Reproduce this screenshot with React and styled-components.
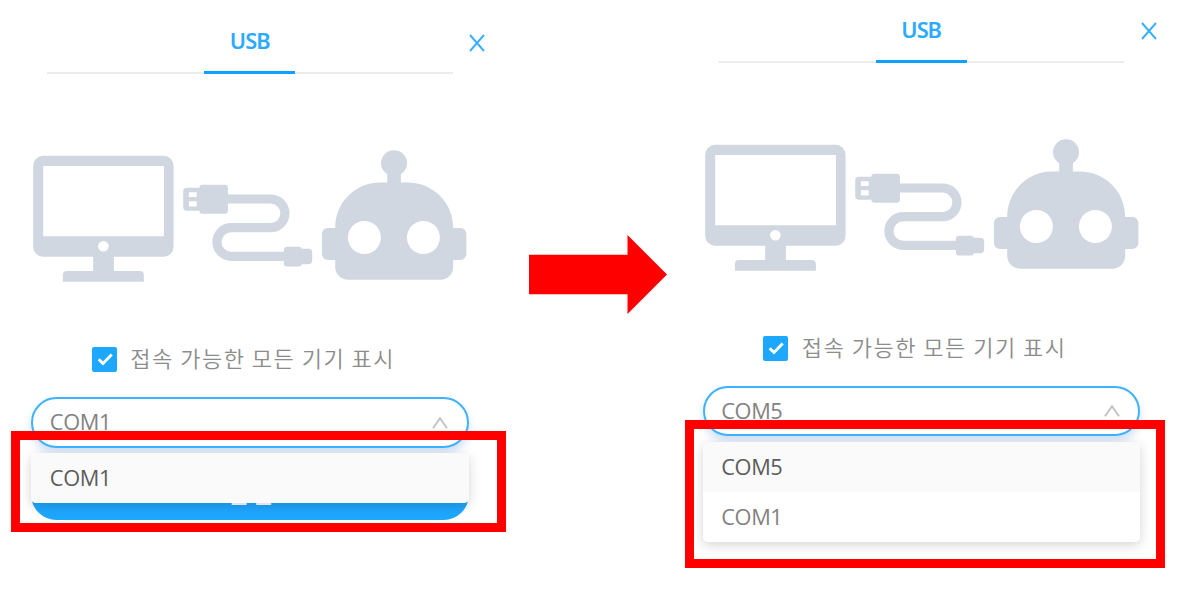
import React from 'react';
import styled, { createGlobalStyle } from 'styled-components';

const GlobalStyle = createGlobalStyle`
  *, *::before, *::after { box-sizing: border-box; }
  body {
    margin: 0;
    background: #fff;
    overflow: hidden;
    font-family: 'Open Sans', 'Noto Sans CJK KR', sans-serif;
  }
`;

const Guide = styled.main`
  position: relative;
  display: flex;
  align-items: flex-start;
  width: 1179px;
  height: 613px;
  padding-left: 31.3px;
`;

const Panel = styled.section`
  display: flex;
  flex-direction: column;
  flex: none;
  width: 437.4px;
  padding-top: ${(p) => p.$top}px;
`;

const Header = styled.header`
  display: flex;
  height: 62.7px;
  padding-left: 15.4px;
`;

const TabBar = styled.nav`
  display: flex;
  justify-content: center;
  flex: none;
  width: 406px;
  box-shadow: inset 0 -2px #ececec;
`;

const Tab = styled.button`
  width: 91px;
  padding: 0 0 1.6px;
  border: 0;
  border-bottom: 3.4px solid #0fa1ff;
  background: none;
  color: #2aabff;
  font: 650 21.8px/53px 'Noto Sans', sans-serif;
  letter-spacing: -1px;
`;

const Close = styled.button`
  flex: none;
  width: 16px;
  height: 18px;
  margin: 22.3px 0 0 16.8px;
  padding: 0;
  border: 0;
  background: none;
  svg { display: block; }
`;

const Artwork = styled.svg`
  display: block;
  width: 437px;
  height: 133px;
  margin-top: 75px;
  color: #d0d7e0;
`;

const CheckRow = styled.label`
  display: flex;
  align-items: center;
  height: 34px;
  margin: 61px 0 0 60.5px;
  color: #8c8c8c;
  white-space: nowrap;
`;

const CheckText = styled.span`
  padding-bottom: 5px;
  font: 350 22px/30px 'Noto Sans CJK KR', sans-serif;
  letter-spacing: 1.5px;
`;

const CheckBox = styled.span`
  display: flex;
  width: 25px;
  height: 25px;
  margin-right: 13.5px;
  border-radius: 2px;
  background: #1ea7ff;
`;

const Select = styled.div`
  display: flex;
  align-items: center;
  justify-content: space-between;
  height: 50.4px;
  margin-top: 20.4px;
  padding: 0 18.6px 0 16.5px;
  border: 2px solid #3db2ff;
  border-radius: 26px;
  background: #fff;
  box-shadow: 0 5px 9px rgba(50, 115, 220, 0.23);
`;

const PortName = styled.span`
  padding-bottom: ${(p) => (p.$inMenu ? 0 : 1.2)}px;
  color: ${(p) => (p.$strong ? '#5c5c5c' : '#828282')};
  font: ${(p) => (p.$strong ? 520 : 390)} 21.8px/30px 'Open Sans', sans-serif;
  letter-spacing: -0.4px;
`;

const MenuArea = styled.div`
  position: relative;
  height: 74px;
  padding-top: 5.3px;
`;

const Menu = styled.div`
  position: relative;
  overflow: hidden;
  border-radius: 5px;
  background: #fff;
  box-shadow: 0 3px 12px rgba(0, 0, 0, 0.17);
`;

const Option = styled.div`
  display: flex;
  align-items: center;
  height: 50.2px;
  padding-left: 18.5px;
  background: ${(p) => (p.$selected ? '#fafafa' : '#fff')};
`;

const Connect = styled.button`
  position: absolute;
  inset: 21.3px 0 auto;
  height: 50.5px;
  padding: 0;
  border: 0;
  border-radius: 26px;
  background: #1ea7ff;
  color: #fff;
  font: 500 24px/47px 'Noto Sans CJK KR', sans-serif;
  letter-spacing: 2.5px;
  span { display: block; height: 50px; padding-left: 2px; }
`;

const Arrow = styled.svg`
  flex: none;
  width: 138px;
  height: 79px;
  margin: 235px 35.8px 0 60.3px;
`;

const Highlight = styled.div`
  position: absolute;
  left: ${(p) => p.$x}px;
  top: ${(p) => p.$y}px;
  width: ${(p) => p.$w}px;
  height: ${(p) => p.$h}px;
  border: 9px solid #f00;
`;

function UsbArtwork() {
  return (
    <Artwork viewBox="31.1 149 437 133" fill="currentColor">
      <path
        fillRule="evenodd"
        d="M43.3 155.8h120.4a10 10 0 0 1 10 10v80.9a10 10 0 0 1-10 10H114V271h26a4 4 0 0 1 4 4v6.7H63V275a4 4 0 0 1 4-4h26.3v-14.3h-50a10 10 0 0 1-10-10v-80.9a10 10 0 0 1 10-10zM43.3 166v70.3H164V166zM103.5 241a5.3 5.3 0 1 0 0 10.6 5.3 5.3 0 0 0 0-10.6z"
      />
      <path
        fillRule="evenodd"
        d="M187 187.8h12.5a3 3 0 0 1 3-3H225a3 3 0 0 1 3 3v23a3 3 0 0 1-3 3h-22.5a3 3 0 0 1-3-3H187a3.7 3.7 0 0 1-3.7-3.7v-15.6a3.7 3.7 0 0 1 3.7-3.7zM189 192.2v4.9h7.8v-4.9zM189 201.3v5.2h7.8v-5.2z"
      />
      <path
        fill="none"
        stroke="currentColor"
        strokeWidth="9.2"
        d="M227 199h43.7a14.35 14.35 0 0 1 0 28.7h-39.4a14.3 14.3 0 0 0 0 28.6H286"
      />
      <path d="M287 246.8h12a3 3 0 0 1 3 2h6.3a4 4 0 0 1 4 4v7.5a4 4 0 0 1-4 4H302a3 3 0 0 1-3 2.3h-12a3 3 0 0 1-3-3v-13.8a3 3 0 0 1 3-3z" />
      <path
        fillRule="evenodd"
        d="M380 182.6h7.3v-8.4a13 13 0 1 1 13.7 0v8.4h7c25 0 45.3 20 45.3 45.4h7.2a6 6 0 0 1 6 6v20a6 6 0 0 1-6 6h-7.2v6.7a13 13 0 0 1-13 13h-92a13 13 0 0 1-13-13V260H328a6 6 0 0 1-6-6v-20a6 6 0 0 1 6-6h7.3c0-25.4 20-45.4 44.7-45.4zM364.5 221a16.5 16.5 0 1 0 0 33 16.5 16.5 0 0 0 0-33zM423.5 221a16.5 16.5 0 1 0 0 33 16.5 16.5 0 0 0 0-33z"
      />
    </Artwork>
  );
}

function ConnectionPanel({ top, value, options, children }) {
  return (
    <Panel $top={top}>
      <Header>
        <TabBar>
          <Tab>USB</Tab>
        </TabBar>
        <Close aria-label="close">
          <svg width="16" height="18" fill="none" stroke="#35afff" strokeWidth="1.9">
            <path d="M1 1l14 16M15 1L1 17" />
          </svg>
        </Close>
      </Header>
      <UsbArtwork />
      <CheckRow>
        <CheckBox>
          <svg width="25" height="25" fill="none" stroke="#fff" strokeWidth="2.9">
            <path d="M6.7 12.2l4.3 4.3 8.7-8.9" />
          </svg>
        </CheckBox>
        <CheckText>접속 가능한 모든 기기 표시</CheckText>
      </CheckRow>
      <Select>
        <PortName>{value}</PortName>
        <svg width="16" height="12" fill="none" stroke="#c4c4c4" strokeWidth="2">
          <path d="M1 11.2L8 1.2l7 10" />
        </svg>
      </Select>
      <MenuArea>
        {children}
        <Menu>
          {options.map((name, i) => (
            <Option key={name} $selected={i === 0}>
              <PortName $inMenu $strong={i === 0}>{name}</PortName>
            </Option>
          ))}
        </Menu>
      </MenuArea>
    </Panel>
  );
}

export default function App() {
  return (
    <>
      <GlobalStyle />
      <Guide>
        <ConnectionPanel top={11.3} value="COM1" options={['COM1']}>
          <Connect><span>연결</span></Connect>
        </ConnectionPanel>
        <Arrow viewBox="0 0 138 79" fill="#f00">
          <path d="M0 19.7h98.5V0L138 39.5 98.5 79V59.2H0z" />
        </Arrow>
        <ConnectionPanel top={0} value="COM5" options={['COM5', 'COM1']} />
        <Highlight $x={11} $y={431} $w={495} $h={101} />
        <Highlight $x={685} $y={420} $w={480} $h={148} />
      </Guide>
    </>
  );
}
